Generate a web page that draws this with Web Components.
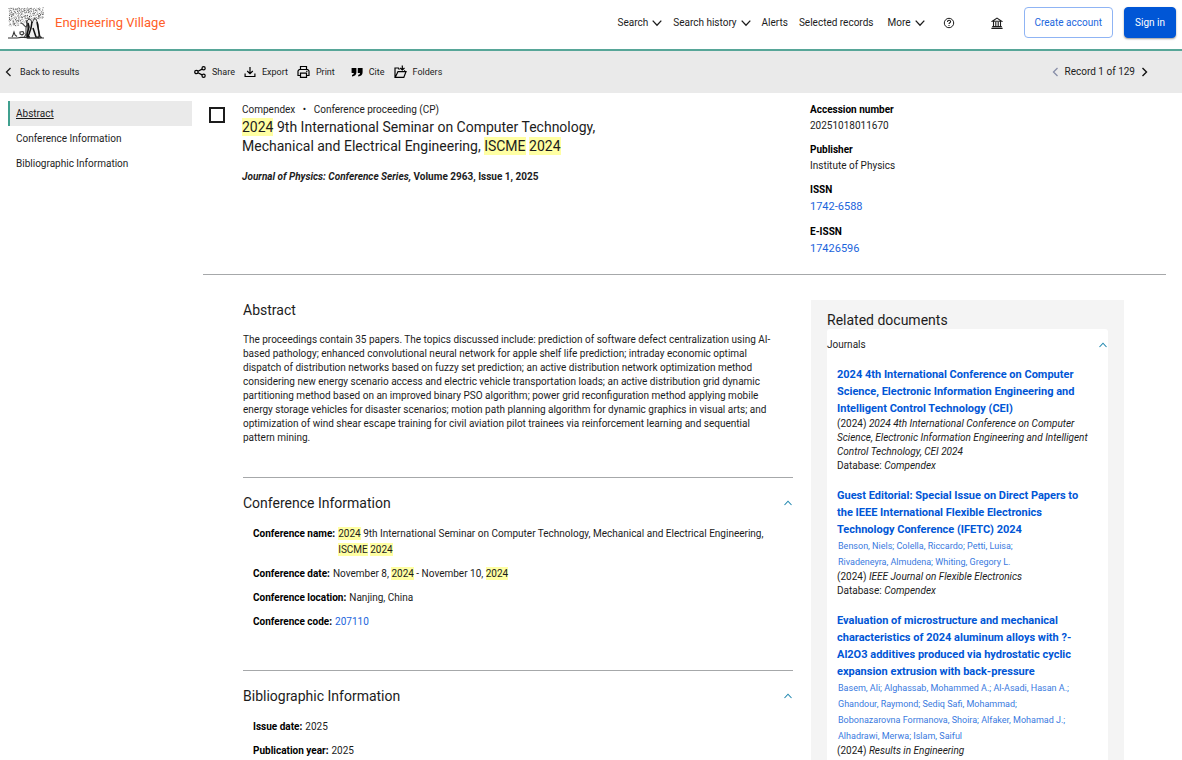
<!DOCTYPE html>
<html lang="en">
<head>
<meta charset="utf-8">
<title>Engineering Village</title>
<style>
body { margin: 0; background: #fff; color: #1c1c1c; font: 10px/16px Roboto, "Noto Sans", sans-serif; }
</style>
</head>
<body>
<ev-app></ev-app>
<script>
const define = (name, html, setup) => {
  const template = document.createElement('template');
  template.innerHTML = html;
  customElements.define(name, class extends HTMLElement {
    constructor() {
      super();
      this.attachShadow({ mode: 'open' }).append(template.content.cloneNode(true));
    }
    connectedCallback() { if (setup) setup(this, this.shadowRoot); }
  });
};

const ICONS = {
  down: [10, 12, '<path d="M.7 3.600L5 8.200l4.300-4.600" stroke-width="1.300"/>'],
  up: [8, 8, '<path d="M.5 6L4 2.200 7.500 6" stroke-width="1.100"/>'],
  left: [7, 10, '<path d="M5.500 1L1.500 5l4 4" stroke-width="1.300"/>'],
  right: [7, 10, '<path d="M1.500 1l4 4-4 4" stroke-width="1.400"/>'],
  help: [12, 12, '<circle cx="6" cy="6" r="4.700" stroke-width="1"/><path d="M4.500 5c0-2.200 3.100-2.200 3.100-.3 0 1.200-1.600 1-1.600 2.300M6 8v1.100" stroke-width="1.100"/>'],
  bank: [12, 12, '<path d="M1.300 4.200L6 1.100l4.700 3.100zM2.500 4.500v5M4.800 5v4.500M7.200 5v4.500M9.500 4.500v5M1.200 9.600h9.600M.4 11.400h11.200" stroke-width="1.100"/>'],
  share: [12, 12, '<circle cx="2.400" cy="6" r="1.700"/><circle cx="9.600" cy="2.300" r="1.600"/><circle cx="9.600" cy="9.800" r="1.600"/><path d="M4 5.200l4.100-2.100M4 6.800l4.100 2.100"/>'],
  export: [12, 12, '<path d="M6 1v6.600M3.200 5L6 7.700 8.800 5M1.100 7.600v2.900h9.800v-2.900"/>'],
  print: [13, 14, '<path d="M3.500 4.500v-3h6v3M3.500 10.500H1v-4.600l1.200-1.400h8.600L12 5.900v4.600H9.500M3.500 8.200h6v4.200h-6zM9.200 6.400h1.200"/>'],
  cite: [12, 12, '<path d="M.6 2h4.800v4.200C5.400 8.600 3.800 10.200 1 10.400V8.800c1.200-.2 1.800-.8 1.800-1.900H.6zM6.800 2h4.800v4.200c0 2.400-1.600 4-4.400 4.200V8.800c1.200-.2 1.800-.8 1.800-1.900H6.800z" fill="currentColor" stroke="none"/>'],
  folders: [13, 14, '<path d="M5.400 4.600L4.400 3H1v9.400h8.800l2.200-5.800H4L1.400 12M10.600 6.400V5.200M8.300 .6v4.200M6.200 3l2.100 2 2.200-2"/>']
};
define('ev-icon', `<style>
  :host { display: inline-flex; flex: none; }
  svg { display: block; fill: none; stroke: currentColor; stroke-width: 1.2; }
</style>`, (host, root) => {
  const [w, h, body] = ICONS[host.getAttribute('name')];
  root.querySelector('svg')?.remove();
  root.innerHTML += `<svg width="${w}" height="${h}" viewBox="0 0 ${w} ${h}" aria-hidden="true">${body}</svg>`;
});

define('ev-tree', `<style>
  :host { display: block; flex: none; }
  svg { display: block; }
</style><svg width="36" height="32" viewBox="0 0 36 32" fill="none" stroke="#222" aria-hidden="true">
  <g class="leaves"></g>
  <path d="M13 16c3 1 3 3 5 4M18 13l1 4-1 4v6l-2 4" stroke="#444" stroke-width="1.100"/>
  <path d="M19 14l2-2 2 1 1 3 2-4h2l2 5 .5 6 2 8H19l1-8z" fill="#eee" stroke="#333" stroke-width=".9"/>
  <path d="M20 16l1 4-2 7v4M24 15l-1 6-3 9h2M25 21l3 9 3 .5M29 15l1.500 8 1 7" stroke="#111" stroke-width="1.500"/>
  <path d="M0 31h9l4-.6h4l3 .6h16M4 30l1-2 1-3 1 3 2 1.500M12 25l3-.5 1 2-2 1.500-2-1zM30 29l4 1.500" stroke="#333" stroke-width="1.100"/>
</svg>`, (host, root) => {
  let seed = 7, light = '', dark = '';
  const rnd = () => (seed = seed * 16807 % 2147483647) / 2147483647;
  for (let y = .8; y < 19; y += 1.300) {
    for (let x = .8; x < 35; x += 1.500) {
      if (y > 12 && x > 16) continue;
      if (y > 16 && x > 10) continue;
      const leaf = `M${(x + rnd()).toFixed(1)} ${(y + rnd()).toFixed(1)}l${(rnd() * 2 - .6).toFixed(1)} ${(rnd() * 1.6 - .8).toFixed(1)}`;
      if (rnd() > .5) dark += leaf; else light += leaf;
    }
  }
  root.querySelector('.leaves').innerHTML = `<path d="${light}" stroke="#999" stroke-width="1.100"/><path d="${dark}" stroke="#2c2c2c" stroke-width=".9"/>`;
});

define('ev-hit', `<style>
  :host { display: inline; }
  mark { background: #ffffa3; color: inherit; padding: 1px 0; }
</style><mark><slot></slot></mark>`);

define('ev-header', `<style>
  :host { display: block; border-bottom: 2px solid #57a698; }
  header { display: flex; align-items: center; padding: 7px 6px 10px 8px; }
  .brand { display: flex; align-items: center; gap: 11px; color: #ff6028; text-decoration: none; font-size: 13px; }
  nav { display: flex; align-items: center; gap: 11px; margin-left: auto; }
  button, a { font: inherit; color: inherit; }
  nav button, nav a { display: flex; align-items: center; gap: 4px; border: 0; padding: 0; background: none; text-decoration: none; }
  .more { margin-left: 3px; }
  .icon { margin-left: 7px; }
  .icon + .icon { margin-left: 25px; }
  .account { display: flex; align-self: flex-start; gap: 11px; margin-left: 21px; }
  .account button { box-sizing: border-box; height: 31px; padding: 0 10px; border: 1px solid #8fb4f4; border-radius: 4px; background: #fff; color: #2167dd; }
  .account .primary { border-color: #0056d6; background: #0056d6; color: #fff; box-shadow: 0 1px 2px #0006; }
</style>
<header>
  <a class="brand" href="#"><ev-tree></ev-tree><span>Engineering Village</span></a>
  <nav aria-label="Main">
    <button>Search <ev-icon name="down"></ev-icon></button>
    <button>Search history <ev-icon name="down"></ev-icon></button>
    <a href="#">Alerts</a>
    <a href="#">Selected records</a>
    <button class="more">More <ev-icon name="down"></ev-icon></button>
    <button class="icon" aria-label="Help"><ev-icon name="help"></ev-icon></button>
    <button class="icon" aria-label="Institution"><ev-icon name="bank"></ev-icon></button>
  </nav>
  <div class="account"><button>Create account</button><button class="primary">Sign in</button></div>
</header>`);

define('ev-tool', `<style>
  :host { display: block; }
  button { display: flex; align-items: center; gap: 6px; padding: 0; border: 0; background: none; font: inherit; color: inherit; }
  ev-icon { color: #000; }
</style><button><slot></slot></button>`, (host, root) => {
  if (root.querySelector('ev-icon')) return;
  const icon = document.createElement('ev-icon');
  icon.setAttribute('name', host.getAttribute('icon'));
  root.querySelector('button').prepend(icon);
});

define('ev-toolbar', `<style>
  :host { display: grid; grid-template-columns: 194px 1fr auto; align-items: center; padding: 13px 0; background: #eaeaea; }
  a { display: flex; align-items: center; gap: 8px; padding-left: 5px; color: inherit; text-decoration: none; font-size: 9px; }
  .tools { display: flex; align-items: center; gap: 9px; font-size: 9px; }
  .cite { margin-left: 7px; }
  .pager { display: flex; align-items: center; gap: 6px; padding-right: 34px; }
  .pager button { display: flex; padding: 0; border: 0; background: none; color: #111; }
  .pager button:disabled { color: #888ea8; }
</style>
<a href="#"><ev-icon name="left"></ev-icon>Back to results</a>
<div class="tools">
  <ev-tool icon="share">Share</ev-tool><ev-tool icon="export">Export</ev-tool><ev-tool icon="print">Print</ev-tool>
  <ev-tool class="cite" icon="cite">Cite</ev-tool><ev-tool icon="folders">Folders</ev-tool>
</div>
<div class="pager">
  <button disabled aria-label="Previous record"><ev-icon name="left"></ev-icon></button>
  <span>Record 1 of 129</span>
  <button aria-label="Next record"><ev-icon name="right"></ev-icon></button>
</div>`);

define('ev-sections', `<style>
  :host { display: block; padding: 8px 11px 0 8px; }
  a { display: block; padding: 5px 6px 4px 8px; color: inherit; text-decoration: none; }
  .on { border-left: 2px solid #40a08f; padding-left: 6px; background: #eaeaea; text-decoration: underline; }
</style>
<nav aria-label="Sections">
  <a class="on" href="#abstract">Abstract</a><a href="#conference">Conference Information</a><a href="#biblio">Bibliographic Information</a>
</nav>`);

define('ev-record-head', `<style>
  :host { display: grid; grid-template-columns: 607fr 356fr; border-bottom: 1px solid #a6a8aa; padding: 9px 0 8px; }
  .record { display: grid; grid-template-columns: 39px minmax(0, 380px); }
  input { appearance: none; box-sizing: border-box; width: 16px; height: 16px; margin: 5px 6px; border: 2px solid #1c1c1c; background: #fff; }
  h1 { margin: 0; font-size: 14px; line-height: 19px; font-weight: 400; }
  p { margin: 0; }
  .source { margin-top: 13px; font-weight: 700; }
  .dot { margin: 0 5px; }
  dl { margin: 0; }
  dt { font-weight: 700; color: #000; }
  dd { margin: 0 0 8px; }
  dd.link { line-height: 18px; font-size: 11px; }
  a { color: #1b64dc; text-decoration: none; }
</style>
<div class="record">
  <input type="checkbox" aria-label="Select record">
  <div>
    <p>Compendex <span class="dot">•</span> Conference proceeding (CP)</p>
    <h1><ev-hit>2024</ev-hit> 9th International Seminar on Computer Technology, Mechanical and Electrical Engineering, <ev-hit>ISCME</ev-hit> <ev-hit>2024</ev-hit></h1>
    <p class="source"><i>Journal of Physics: Conference Series,</i> Volume 2963, Issue 1, 2025</p>
  </div>
</div>
<dl>
  <dt>Accession number</dt><dd>20251018011670</dd>
  <dt>Publisher</dt><dd>Institute of Physics</dd>
  <dt>ISSN</dt><dd class="link"><a href="#">1742-6588</a></dd>
  <dt>E-ISSN</dt><dd class="link"><a href="#">17426596</a></dd>
</dl>`);

define('ev-field', `<style>
  :host { display: flex; gap: 3px; margin: 0 0 8px 10px; }
  b { flex: none; color: #000; }
</style><b><slot name="label"></slot></b><span><slot></slot></span>`);

define('ev-panel', `<style>
  :host { display: block; }
  :host([ruled]) { border-top: 1px solid #a6a8aa; }
  .head { display: flex; align-items: center; justify-content: space-between; padding-right: 1px; }
  h2 { margin: 0; font-size: 14px; line-height: 20px; font-weight: 400; }
  button { display: none; padding: 0; border: 0; background: none; color: #2389b0; }
  :host([ruled]) button { display: flex; }
</style>
<div class="head"><h2><slot name="title"></slot></h2><button aria-label="Collapse section"><ev-icon name="up"></ev-icon></button></div>
<slot></slot>`);

define('ev-related-item', `<style>
  :host { display: block; margin-bottom: 14px; line-height: 14px; }
  h3 { margin: 0; font-size: 11px; line-height: 17px; }
  a { color: #0056d6; text-decoration: none; }
  .authors { font-size: 9px; line-height: 16px; padding-left: 1px; color: #3a7ae0; }
</style>
<h3><a href="#"><slot name="title"></slot></a></h3>
<div class="authors"><slot name="authors"></slot></div>
<div>(2024) <i><slot></slot></i></div>
<div>Database: <i>Compendex</i></div>`);

define('ev-related', `<style>
  :host { display: block; padding: 11px 16px 0; background: #f4f4f4; }
  h2 { margin: 0; font-size: 14px; line-height: 18px; font-weight: 400; }
  .card { background: #fff; border-radius: 3px 3px 0 0; padding-top: 8px; }
  .head { display: flex; justify-content: space-between; align-items: center; padding-right: 1px; }
  button { display: flex; padding: 0; border: 0; background: none; color: #2389b0; }
  .items { padding: 13px 8px 0 10px; }
</style>
<h2>Related documents</h2>
<div class="card">
  <div class="head"><span>Journals</span><button aria-label="Collapse journals"><ev-icon name="up"></ev-icon></button></div>
  <div class="items">
    <ev-related-item><span slot="title">2024 4th International Conference on Computer Science, Electronic Information Engineering and Intelligent Control Technology (CEI)</span>2024 4th International Conference on Computer Science, Electronic Information Engineering and Intelligent Control Technology, CEI 2024</ev-related-item>
    <ev-related-item><span slot="title">Guest Editorial: Special Issue on Direct Papers to<br>the IEEE International Flexible Electronics<br>Technology Conference (IFETC) 2024</span><span slot="authors">Benson, Niels; Colella, Riccardo; Petti, Luisa;<br>Rivadeneyra, Almudena; Whiting, Gregory L.</span>IEEE Journal on Flexible Electronics</ev-related-item>
    <ev-related-item><span slot="title">Evaluation of microstructure and mechanical characteristics of 2024 aluminum alloys with ?-Al2O3 additives produced via hydrostatic cyclic expansion extrusion with back-pressure</span><span slot="authors">Basem, Ali; Alghassab, Mohammed A.; Al-Asadi, Hasan A.;<br>Ghandour, Raymond; Sediq Safi, Mohammad;<br>Bobonazarovna Formanova, Shoira; Alfaker, Mohamad J.;<br>Alhadrawi, Merwa; Islam, Saiful</span>Results in Engineering</ev-related-item>
  </div>
</div>`);

define('ev-details', `<style>
  :host { display: grid; grid-template-columns: minmax(0, 1fr) 313px; gap: 18px; padding: 25px 42px 0 40px; align-items: start; }
  .abstract { margin: 13px 0 32px; line-height: 14px; }
  ev-panel[ruled] { padding-top: 15px; }
  ev-panel .first { margin-top: 13px; }
  #conference { padding-bottom: 32px; }
  a { color: #1b64dc; text-decoration: none; }
</style>
<div>
  <ev-panel id="abstract"><span slot="title">Abstract</span>
    <p class="abstract">The proceedings contain 35 papers. The topics discussed include: prediction of software defect centralization using AI-<br>based pathology; enhanced convolutional neural network for apple shelf life prediction; intraday economic optimal<br>dispatch of distribution networks based on fuzzy set prediction; an active distribution network optimization method<br>considering new energy scenario access and electric vehicle transportation loads; an active distribution grid dynamic<br>partitioning method based on an improved binary PSO algorithm; power grid reconfiguration method applying mobile<br>energy storage vehicles for disaster scenarios; motion path planning algorithm for dynamic graphics in visual arts; and<br>optimization of wind shear escape training for civil aviation pilot trainees via reinforcement learning and sequential<br>pattern mining.</p>
  </ev-panel>
  <ev-panel ruled id="conference"><span slot="title">Conference Information</span>
    <ev-field class="first"><span slot="label">Conference name:</span><ev-hit>2024</ev-hit> 9th International Seminar on Computer Technology, Mechanical and Electrical Engineering, <ev-hit>ISCME</ev-hit> <ev-hit>2024</ev-hit></ev-field>
    <ev-field><span slot="label">Conference date:</span>November 8, <ev-hit>2024</ev-hit> - November 10, <ev-hit>2024</ev-hit></ev-field>
    <ev-field><span slot="label">Conference location:</span>Nanjing, China</ev-field>
    <ev-field><span slot="label">Conference code:</span><a href="#">207110</a></ev-field>
  </ev-panel>
  <ev-panel ruled id="biblio"><span slot="title">Bibliographic Information</span>
    <ev-field class="first"><span slot="label">Issue date:</span>2025</ev-field>
    <ev-field><span slot="label">Publication year:</span>2025</ev-field>
  </ev-panel>
</div>
<ev-related></ev-related>`);

define('ev-app', `<style>
  :host { display: block; height: 100vh; overflow: auto; scrollbar-width: none; }
  main { display: grid; grid-template-columns: 203px minmax(0, 1fr); padding-right: 16px; }
</style>
<ev-header></ev-header>
<ev-toolbar></ev-toolbar>
<main>
  <ev-sections></ev-sections>
  <article><ev-record-head></ev-record-head><ev-details></ev-details></article>
</main>`);
</script>
</body>
</html>
